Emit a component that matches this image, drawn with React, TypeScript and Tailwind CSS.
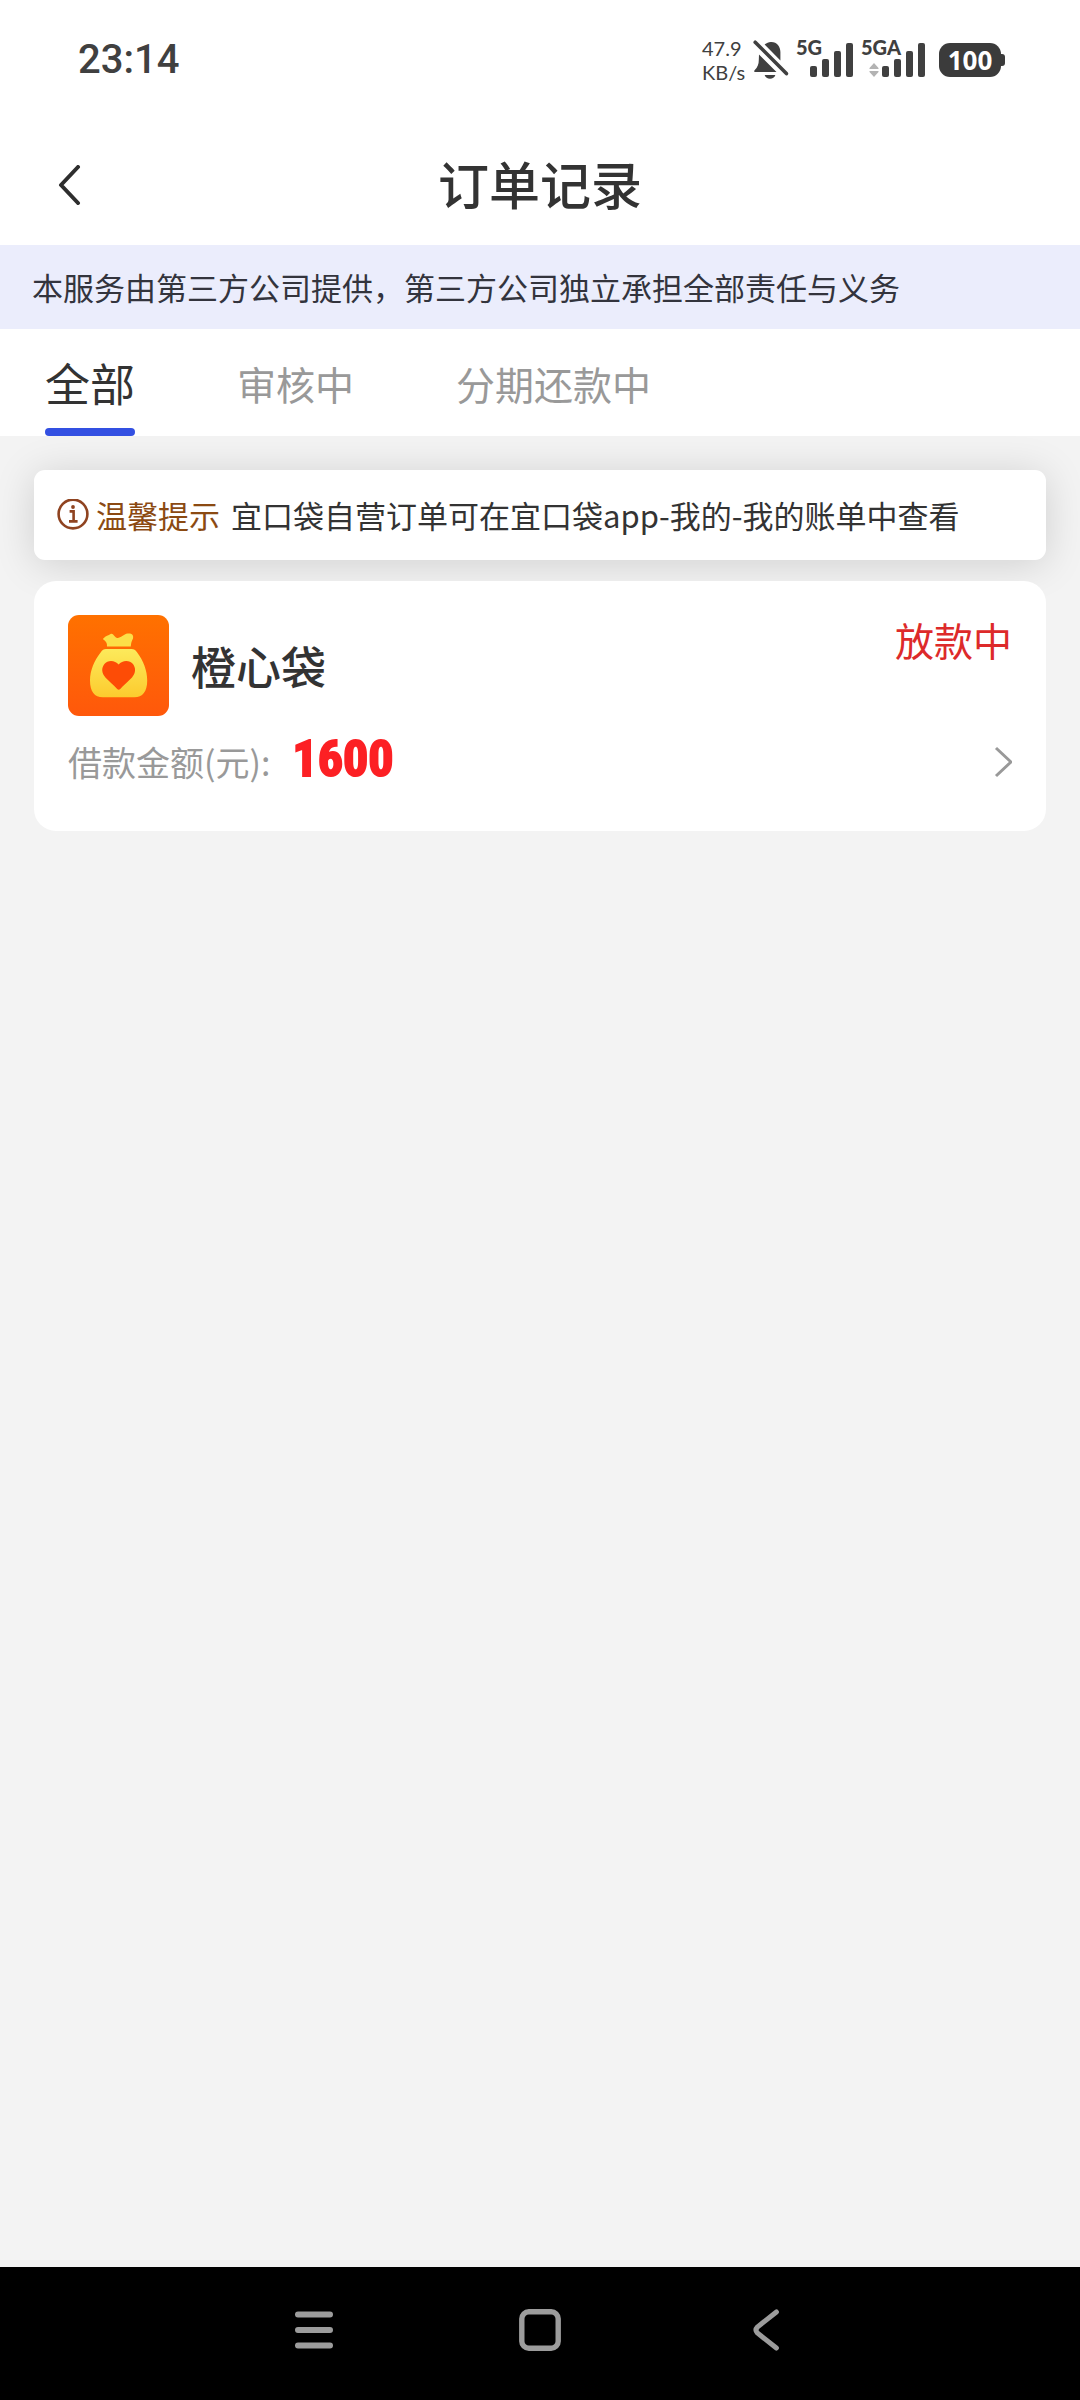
const tabs = ["全部", "审核中", "分期还款中"]

const BellOff = () => (
  <svg width="37" height="40" viewBox="0 0 37 40" fill="#404040" aria-hidden="true">
    <path d="M6 14.5 L23.5 32 H2.4 C1 32 .8 31 1.6 30.2 C4.6 27 5.8 24.5 5.8 20 Z" />
    <path d="M11.6 4.6 C14 2.6 16 1.8 18.4 2 C24 2.2 27.4 6.5 27.4 12 V20.4 Z" />
    <path d="M11.6 35 H22.4 C21.4 37.6 19.6 38.8 17 38.8 C14.4 38.8 12.6 37.6 11.6 35 Z" />
    <path d="M2.2 2.2 L33.4 33.6" stroke="#404040" strokeWidth="3.6" strokeLinecap="round" />
  </svg>
)

const SignalBars = () => (
  <svg width="43" height="34" viewBox="0 0 43 34" fill="#404040" aria-hidden="true">
    <rect x="0" y="23" width="7" height="11" rx="2" />
    <rect x="12" y="16" width="7" height="18" rx="2" />
    <rect x="24" y="8" width="7" height="26" rx="2" />
    <rect x="36" y="0" width="7" height="34" rx="2" />
  </svg>
)

const MoneyBag = () => (
  <svg className="size-[101px] shrink-0 rounded-[11px]" viewBox="0 0 101 101" aria-hidden="true">
    <defs>
      <linearGradient id="orange" x1="0" y1="0" x2="0" y2="1">
        <stop offset="0" stopColor="#ff7100" />
        <stop offset="1" stopColor="#ff580b" />
      </linearGradient>
      <linearGradient id="gold" x1="0" y1="0" x2="0" y2="1">
        <stop offset="0" stopColor="#fcea5b" />
        <stop offset="1" stopColor="#fccb2e" />
      </linearGradient>
    </defs>
    <rect width="101" height="101" fill="url(#orange)" />
    <path
      d="M35.6 23.2 C37.5 21 40.5 20.6 42.6 19 C45.2 17.8 46.6 22.6 49.4 23 C52.6 23.2 55.6 19.2 59.6 18.6 C63.4 18 66 20 65 23.4 C63.6 26.4 63 28 62.8 31.4 H39 C39.4 28 37.6 26 35.4 24.6 C34.8 24.2 35 23.6 35.6 23.2 Z"
      fill="#fcdf48"
    />
    <path
      d="M38 34 H63.6 C66 34 67.4 35.2 69 37.2 C75.4 45.4 79.2 55.6 79.2 65.4 C79.2 76.4 74.6 82.2 66.4 82.2 H34.8 C26.6 82.2 22 76.4 22 65.4 C22 55.6 26.2 45.4 32.8 37.2 C34.4 35.2 35.6 34 38 34 Z"
      fill="url(#gold)"
    />
    <path
      d="M50.6 49.4 C47 45 39.8 44.6 36.4 49 C33 53.4 33.8 58.4 37.4 62.4 C41.4 66.6 46 70.4 49.2 74 C50.2 75 51.2 75 52.2 74 C55.4 70.4 60 66.6 64 62.4 C67.6 58.4 68.2 53.4 65 49 C61.6 44.6 54.2 45 50.6 49.4 Z"
      fill="#fd4c06"
    />
  </svg>
)

const StatusBar = () => (
  <div className="flex h-[120px] items-center justify-between pl-[78px] pr-[75px] text-[#404040]">
    <span className="font-[Roboto] text-[40px] leading-[48px] font-medium">23:14</span>
    <div className="flex items-center font-[Lato]">
      <div className="w-[51px] text-[20px] leading-6">
        <div>47.9</div>
        <div>KB/s</div>
      </div>
      <BellOff />
      <div className="ml-[6px] flex">
        <span className="-mt-2 w-[14px] text-[20px] leading-6 font-black">5G</span>
        <SignalBars />
      </div>
      <div className="relative ml-2 flex">
        <span className="-mt-2 w-[21px] text-[20px] leading-6 font-black">5GA</span>
        <svg className="absolute bottom-0 left-2" width="10" height="14" viewBox="0 0 10 14" fill="#b3b3b3" aria-hidden="true">
          <path d="M5 0 L9.5 5 V6 H.5 V5 Z M5 14 L9.5 9 V8 H.5 V9 Z" />
        </svg>
        <SignalBars />
      </div>
      <div className="ml-[14px] flex items-center">
        <span className="flex h-[34px] w-[62px] items-center justify-center rounded-[11px] bg-[#3b3b3b] font-['Open_Sans'] text-[26px] font-bold text-white">
          100
        </span>
        <span className="h-3 w-[4px] rounded-r-[3px] bg-[#3b3b3b]" />
      </div>
    </div>
  </div>
)

const Header = () => (
  <header className="grid h-[125px] grid-cols-[1fr_auto_1fr] items-center pt-1">
    <button aria-label="返回" className="flex h-full w-[140px] items-center pl-[58px]">
      <svg width="24" height="40" viewBox="0 0 24 40" fill="none" stroke="#2e2e2e" strokeWidth="4" strokeLinecap="round" strokeLinejoin="round">
        <path d="M20 2 L3 20 L20 38" />
      </svg>
    </button>
    <h1 className="pb-1 text-[51px] leading-[60px] font-medium text-[#333]">订单记录</h1>
  </header>
)

const Tabs = () => (
  <nav className="flex h-[107px] gap-[102px] bg-white pl-[45px]">
    {tabs.map((tab, i) => (
      <button
        key={tab}
        className={
          i === 0
            ? "relative text-[45px] leading-[60px] text-[#333] after:absolute after:inset-x-0 after:bottom-0 after:h-2 after:rounded-full after:bg-[#3350e2]"
            : "text-[39px] leading-[60px] text-[#999]"
        }
      >
        {tab}
      </button>
    ))}
  </nav>
)

const Notice = () => (
  <div className="flex h-[90px] items-center rounded-[11px] bg-white pl-[23px] text-[31px] shadow-[0_4px_40px_rgba(0,0,0,0.15)]">
    <svg className="mr-[7px] shrink-0" width="32" height="32" viewBox="0 0 32 32" fill="none" stroke="#8f4320" strokeWidth="2.6" aria-hidden="true">
      <circle cx="16" cy="15" r="14.4" />
      <path d="M12.6 12.4 H16.6 V22 M12 22.4 H20.6" />
      <circle cx="16" cy="8" r="1.9" fill="#8f4320" stroke="none" />
    </svg>
    <span className="text-[#8b4a12]">温馨提示</span>
    <span className="ml-[11px] text-[#333]">宜口袋自营订单可在宜口袋app-我的-我的账单中查看</span>
  </div>
)

const OrderCard = () => (
  <a href="#order" className="relative block h-[250px] rounded-[22px] bg-white px-[34px] pt-[34px]">
    <div className="flex items-start">
      <MoneyBag />
      <h2 className="ml-[22px] self-center text-[45px] leading-[60px] font-medium text-[#333]">橙心袋</h2>
      <span className="ml-auto text-[39px] leading-[48px] text-[#dd2a2a]">放款中</span>
    </div>
    <div className="mt-4 flex">
      <span className="text-[34px] leading-[60px] text-[#999]">借款金额(元):</span>
      <span className="ml-[22px] font-['Roboto_Condensed',Roboto] text-[50px] leading-[54px] font-bold text-[#fc2024] [-webkit-text-stroke:2px_#fc2024]">
        1600
      </span>
      <svg className="ml-auto self-center" width="18" height="32" viewBox="0 0 18 32" fill="none" stroke="#999" strokeWidth="3" aria-hidden="true">
        <path d="M2 2 L17 16 L2 30" />
      </svg>
    </div>
  </a>
)

const SystemNav = () => (
  <footer className="flex h-[133px] justify-center bg-black pb-2">
    <button aria-label="最近任务" className="flex w-[226px] items-center justify-center">
      <svg width="40" height="42" viewBox="0 0 40 42" stroke="#9c9c9c" strokeWidth="6" strokeLinecap="round">
        <path d="M4 5.5 H36 M4 21 H36 M4 36.5 H36" />
      </svg>
    </button>
    <button aria-label="主屏幕" className="flex w-[226px] items-center justify-center">
      <svg width="42" height="42" viewBox="0 0 42 42" fill="none" stroke="#9c9c9c" strokeWidth="5.4">
        <rect x="2.8" y="2.8" width="36.4" height="36.4" rx="7" />
      </svg>
    </button>
    <button aria-label="返回上一级" className="flex w-[226px] items-center justify-center">
      <svg width="28" height="42" viewBox="0 0 28 42" fill="none" stroke="#9c9c9c" strokeWidth="5" strokeLinecap="round">
        <path d="M24.4 3 L5.4 18 Q2.6 21 5.4 24 L24.4 39" />
      </svg>
    </button>
  </footer>
)

export default function App() {
  return (
    <div className="flex min-h-screen flex-col bg-[#f3f3f3] font-['Noto_Sans_CJK_SC',sans-serif]">
      <div className="bg-white">
        <StatusBar />
        <Header />
      </div>
      <p className="bg-[#ebedfc] px-8 py-[18px] text-[31px] leading-[48px] text-[#33343d]">
        本服务由第三方公司提供，第三方公司独立承担全部责任与义务
      </p>
      <Tabs />
      <main className="flex flex-1 flex-col gap-[21px] px-[34px] pt-[34px]">
        <Notice />
        <OrderCard />
      </main>
      <SystemNav />
    </div>
  )
}
